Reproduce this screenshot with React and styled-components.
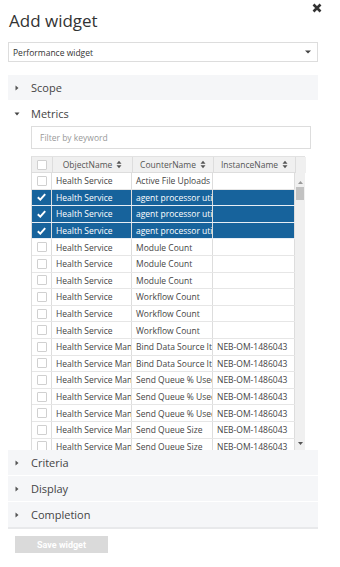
import styled, { createGlobalStyle } from 'styled-components'

const GlobalStyle = createGlobalStyle`
  body {
    margin: 0;
    background: #fff;
    font-family: "Open Sans", "Noto Sans", sans-serif;
    color: #333;
  }
`

const rows = [
  ['Health Service', 'Active File Uploads', '', false],
  ['Health Service', 'agent processor utilization', '', true],
  ['Health Service', 'agent processor utilization', '', true],
  ['Health Service', 'agent processor utilization', '', true],
  ['Health Service', 'Module Count', '', false],
  ['Health Service', 'Module Count', '', false],
  ['Health Service', 'Module Count', '', false],
  ['Health Service', 'Workflow Count', '', false],
  ['Health Service', 'Workflow Count', '', false],
  ['Health Service', 'Workflow Count', '', false],
  ['Health Service Management Group', 'Bind Data Source Item Drop Rate', 'NEB-OM-1486043', false],
  ['Health Service Management Group', 'Bind Data Source Item Drop Rate', 'NEB-OM-1486043', false],
  ['Health Service Management Group', 'Send Queue % Used', 'NEB-OM-1486043', false],
  ['Health Service Management Group', 'Send Queue % Used', 'NEB-OM-1486043', false],
  ['Health Service Management Group', 'Send Queue % Used', 'NEB-OM-1486043', false],
  ['Health Service Management Group', 'Send Queue Size', 'NEB-OM-1486043', false],
  ['Health Service Management Group', 'Send Queue Size', 'NEB-OM-1486043', false],
]

const Caret = ({ open }) => (
  <svg width="6" height="6" viewBox="0 0 6 6">
    {open ? (
      <path d="M0.5 1.5 L5.5 1.5 L3 4.5 Z" fill="#444" />
    ) : (
      <path d="M1.5 0.5 L4.5 3 L1.5 5.5 Z" fill="#555" />
    )}
  </svg>
)

const SortIcon = () => (
  <svg width="6" height="9" viewBox="0 0 6 9">
    <path d="M0.5 3.8 L3 0.8 L5.5 3.8 Z M0.5 5.2 L3 8.2 L5.5 5.2 Z" fill="#555" />
  </svg>
)

const Check = () => (
  <svg width="9" height="8" viewBox="0 0 9 8">
    <path d="M0.8 4.2 L3.3 6.6 L8.2 1.2" stroke="#fff" strokeWidth="2" fill="none" />
  </svg>
)

const Section = ({ label, open }) => (
  <S.Section open={open}>
    <S.CaretBox>
      <Caret open={open} />
    </S.CaretBox>
    <S.SectionLabel>{label}</S.SectionLabel>
  </S.Section>
)

export default () => {
  return (
    <S.Panel>
      <GlobalStyle />
      <S.Header>
        <S.Title>Add widget</S.Title>
        <S.Close>
          <svg width="10" height="10" viewBox="0 0 10 10">
            <path d="M1.5 1.5 L8.5 8.5 M8.5 1.5 L1.5 8.5" stroke="#333" strokeWidth="2.6" />
          </svg>
        </S.Close>
      </S.Header>
      <S.Select>
        <span>Performance widget</span>
        <svg width="6" height="4" viewBox="0 0 6 4">
          <path d="M0 0.5 L6 0.5 L3 3.5 Z" fill="#444" />
        </svg>
      </S.Select>

      <S.Accordion>
        <Section label="Scope" />
        <Section label="Metrics" open />
        <S.MetricsBody>
          <S.Filter placeholder="Filter by keyword" />
          <S.Table>
            <S.HeadRow>
              <S.HeadCell>
                <S.Box />
              </S.HeadCell>
              <S.HeadCell>
                ObjectName <SortIcon />
              </S.HeadCell>
              <S.HeadCell>
                CounterName <SortIcon />
              </S.HeadCell>
              <S.HeadCell>
                InstanceName <SortIcon />
              </S.HeadCell>
              <S.Gutter />
            </S.HeadRow>
            <S.Body>
              <S.Rows>
                {rows.map(([obj, counter, inst, selected], i) => (
                  <S.Row key={i} selected={selected}>
                    <S.CheckCell>{selected ? <Check /> : <S.Box />}</S.CheckCell>
                    <S.Cell>{obj}</S.Cell>
                    <S.Cell>{counter}</S.Cell>
                    <S.Cell>{inst}</S.Cell>
                  </S.Row>
                ))}
              </S.Rows>
              <S.Scrollbar>
                <S.Arrow>
                  <svg width="5" height="3" viewBox="0 0 5 3">
                    <path d="M0 3 L5 3 L2.5 0 Z" fill="#999" />
                  </svg>
                </S.Arrow>
                <S.Thumb />
                <S.Track />
                <S.Arrow>
                  <svg width="5" height="3" viewBox="0 0 5 3">
                    <path d="M0 0 L5 0 L2.5 3 Z" fill="#555" />
                  </svg>
                </S.Arrow>
              </S.Scrollbar>
            </S.Body>
          </S.Table>
        </S.MetricsBody>
        <Section label="Criteria" />
        <Section label="Display" />
        <Section label="Completion" />
      </S.Accordion>
      <S.SaveButton disabled>Save widget</S.SaveButton>
    </S.Panel>
  )
}

const S = {
  Panel: styled.div`
    width: 340px;
    height: 567px;
    box-sizing: border-box;
    padding: 0 22px 0 8px;
    display: flex;
    flex-direction: column;
  `,
  Header: styled.div`
    height: 42px;
    display: flex;
    justify-content: space-between;
    align-items: flex-start;
  `,
  Title: styled.h1`
    margin: 0;
    padding: 9px 0 0 1px;
    font-size: 17px;
    line-height: 23px;
    font-weight: 400;
    color: #333;
  `,
  Close: styled.div`
    margin: 3px -4px 0 0;
    display: flex;
  `,
  Select: styled.div`
    height: 20px;
    box-sizing: border-box;
    border: 1px solid #ddd;
    padding: 0 6px 0 4px;
    display: flex;
    align-items: center;
    justify-content: space-between;
    font-size: 8.5px;
    color: #333;
  `,
  Accordion: styled.div`
    margin-top: 13px;
    display: flex;
    flex-direction: column;
    border-bottom: 2px solid #e8e9eb;
  `,
  Section: styled.div`
    height: 25px;
    flex: none;
    display: flex;
    align-items: center;
    background: ${(props) => (props.open ? '#fff' : '#f5f6f8')};
    & + & {
      border-top: 1px solid #fff;
    }
  `,
  CaretBox: styled.div`
    width: 6px;
    margin-left: 6px;
    display: flex;
  `,
  SectionLabel: styled.span`
    margin-left: 11px;
    font-size: 11px;
    color: #444;
  `,
  MetricsBody: styled.div`
    padding: 0 7px 0 23px;
    background: #fff;
  `,
  Filter: styled.input`
    display: block;
    width: 100%;
    height: 23px;
    box-sizing: border-box;
    border: 1px solid #ddd;
    padding: 0 8px;
    font-family: inherit;
    font-size: 8.5px;
    outline: none;
    &::placeholder {
      color: #999;
    }
  `,
  Table: styled.div`
    margin-top: 7px;
    width: 274px;
  `,
  HeadRow: styled.div`
    display: grid;
    grid-template-columns: 21px 80px 81px 82px 10px;
    height: 17px;
    background: #f0f0f0;
    border-left: 1px solid #ddd;
    border-top: 1px solid #e2e2e2;
    box-sizing: border-box;
  `,
  HeadCell: styled.div`
    display: flex;
    align-items: center;
    justify-content: center;
    gap: 4px;
    border-right: 1px solid #ddd;
    border-bottom: 1px solid #ddd;
    font-size: 8.5px;
    color: #555;
    white-space: nowrap;
    overflow: hidden;
  `,
  Gutter: styled.div`
    background: #f0f0f0;
  `,
  Body: styled.div`
    display: flex;
    height: 277px;
    overflow: hidden;
  `,
  Rows: styled.div`
    width: 264px;
    flex: none;
    border-left: 1px solid #ddd;
    box-sizing: border-box;
  `,
  Row: styled.div`
    display: grid;
    grid-template-columns: 20px 80px 81px 82px;
    height: 16.6px;
    box-sizing: border-box;
    border-bottom: 1px solid ${(props) => (props.selected ? '#e7eef5' : '#e6e6e6')};
    background: ${(props) => (props.selected ? '#17639c' : '#fff')};
    color: ${(props) => (props.selected ? '#fff' : '#444')};
  `,
  CheckCell: styled.div`
    display: flex;
    align-items: center;
    justify-content: center;
    border-right: 1px solid #ddd;
  `,
  Box: styled.div`
    width: 10px;
    height: 10px;
    box-sizing: border-box;
    border: 1px solid #d0d0d0;
    border-radius: 1px;
    background: #fff;
  `,
  Cell: styled.div`
    padding-left: 4px;
    display: flex;
    align-items: center;
    border-right: 1px solid #ddd;
    font-size: 8.5px;
    white-space: nowrap;
    overflow: hidden;
  `,
  Scrollbar: styled.div`
    width: 10px;
    background: #f0f0f0;
    display: flex;
    flex-direction: column;
    align-items: center;
  `,
  Arrow: styled.div`
    height: 10px;
    display: flex;
    align-items: center;
    justify-content: center;
    &:first-child {
      margin-top: 4px;
    }
    &:last-child {
      margin-bottom: 2px;
    }
  `,
  Thumb: styled.div`
    width: 8px;
    height: 13px;
    background: #c2c2c2;
  `,
  Track: styled.div`
    flex: 1;
  `,
  SaveButton: styled.button`
    margin: 7px 0 0 7px;
    width: 93px;
    height: 17px;
    border: none;
    background: #dadada;
    color: #fff;
    font-family: "Roboto", "Open Sans", sans-serif;
    font-size: 9px;
    font-weight: 700;
    padding: 0;
  `,
}
